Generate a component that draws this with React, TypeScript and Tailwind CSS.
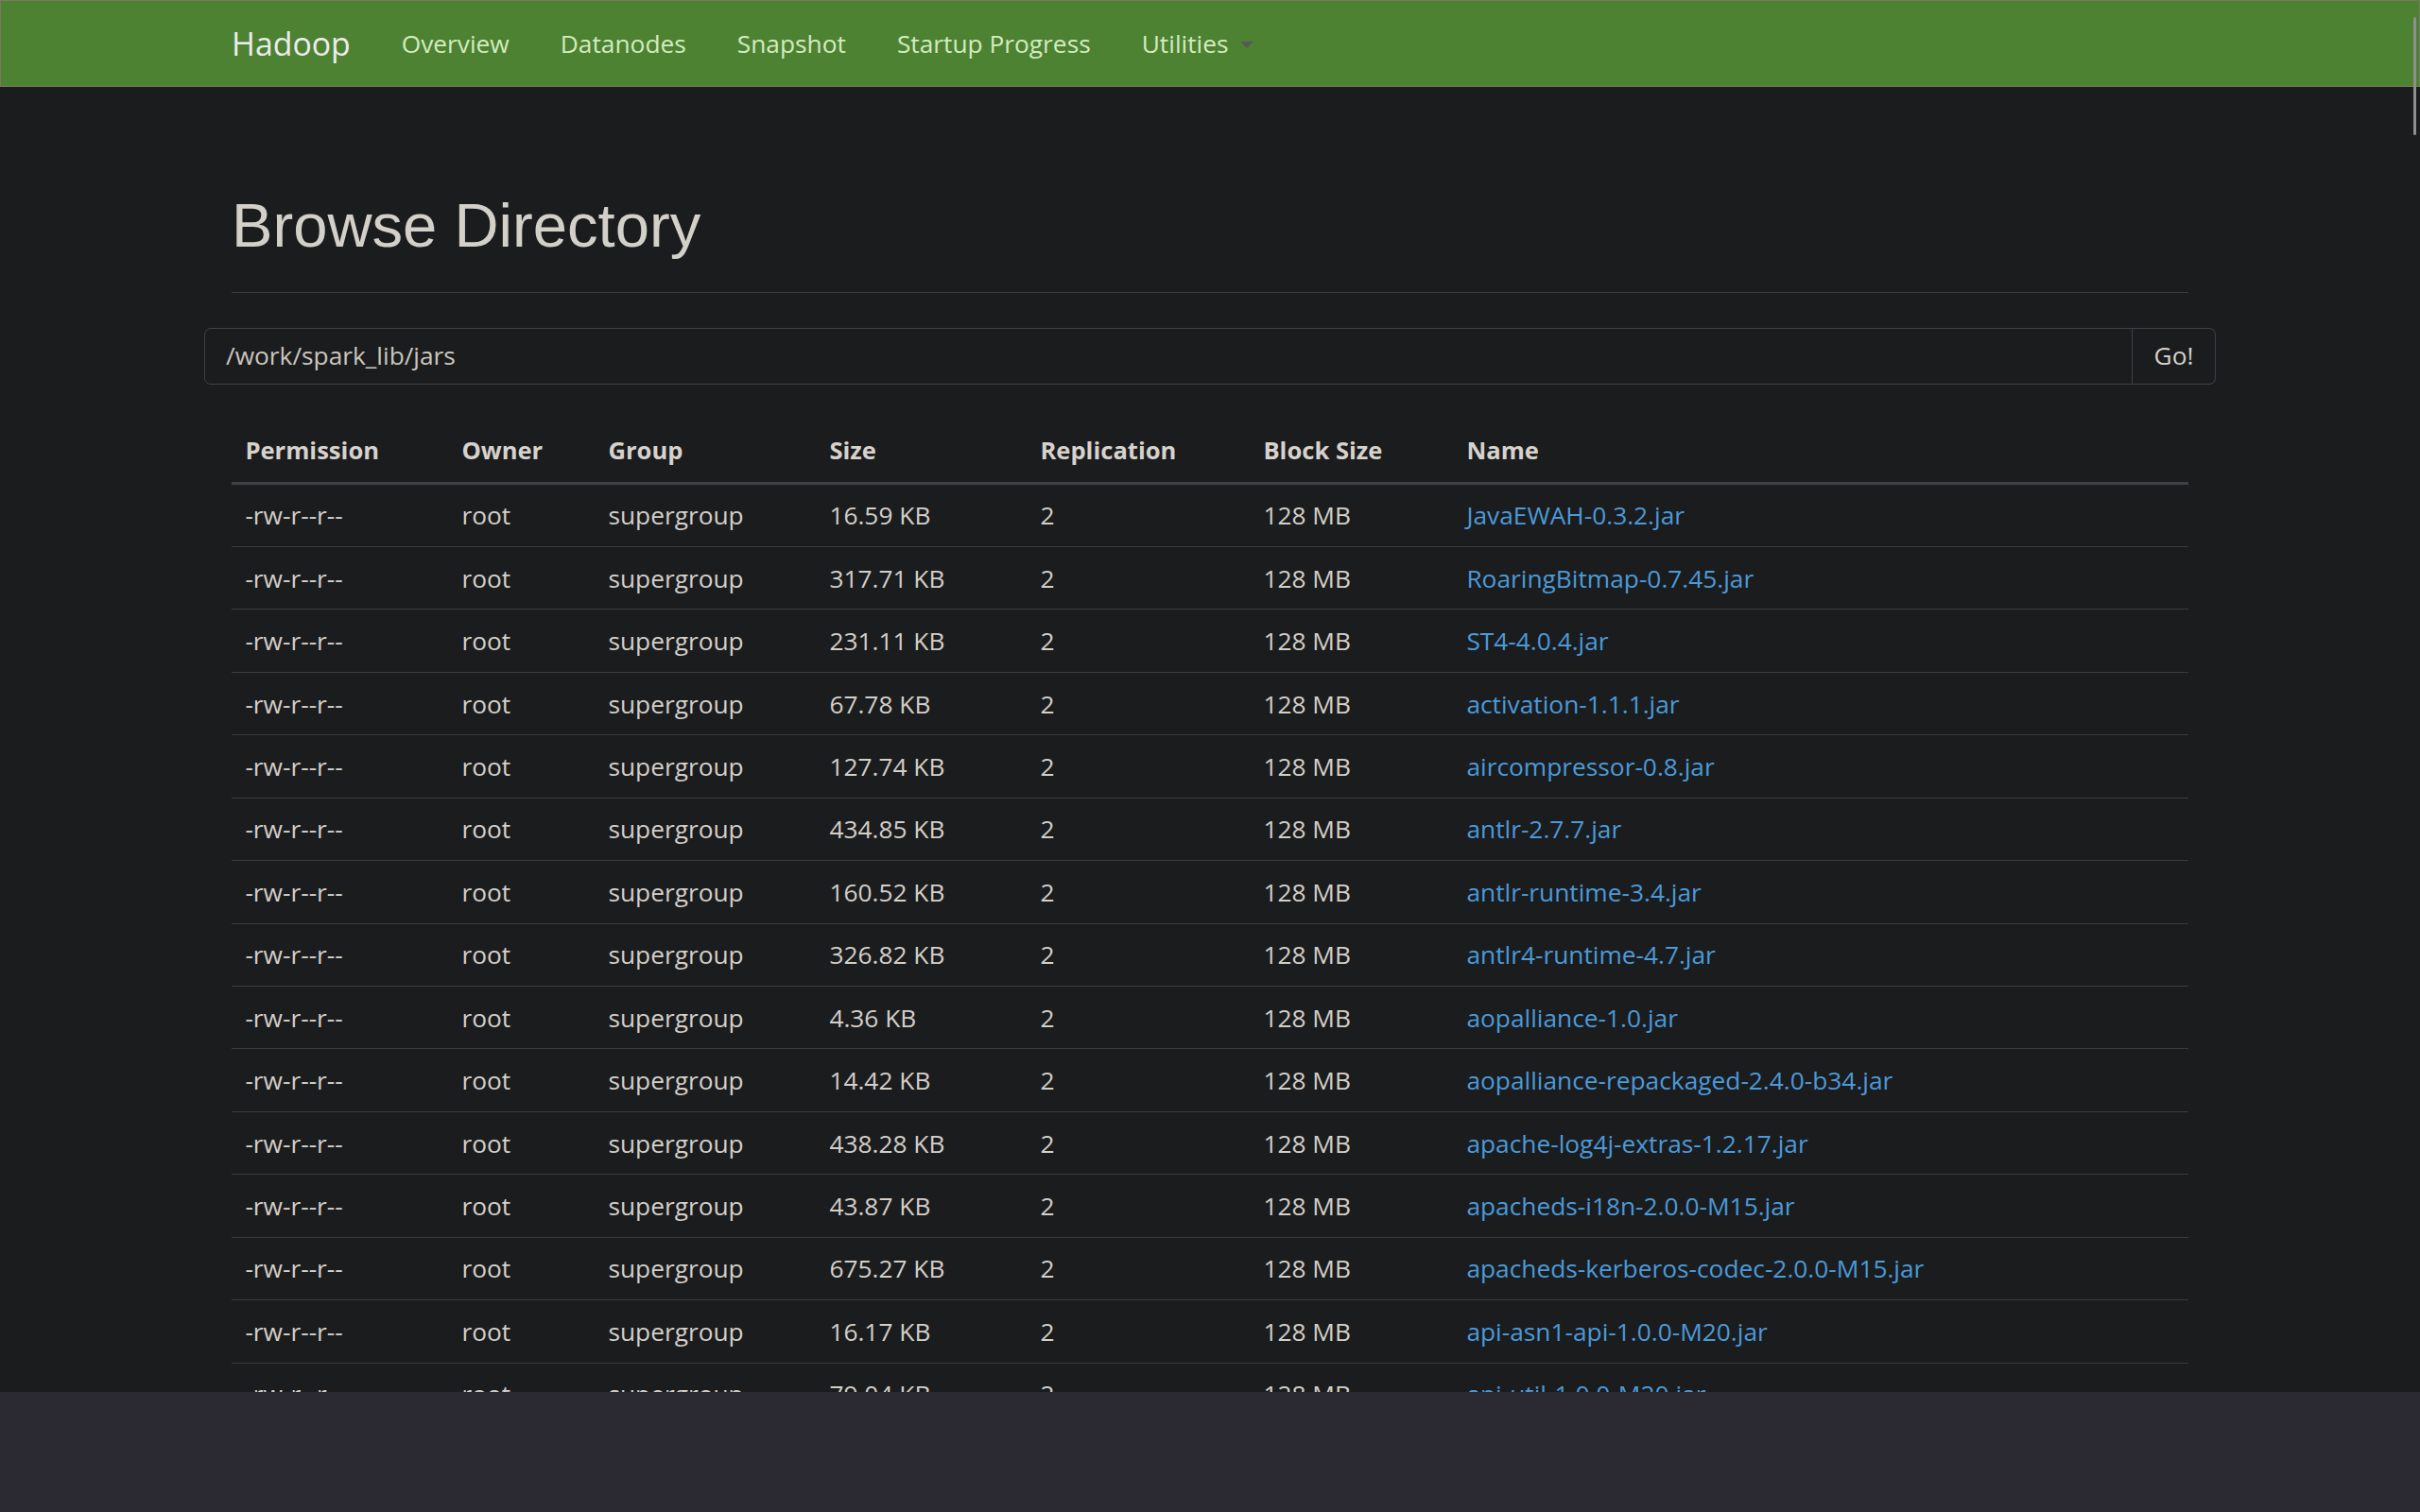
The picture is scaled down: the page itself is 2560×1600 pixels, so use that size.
import React from 'react';

const navLinks = ['Overview', 'Datanodes', 'Snapshot', 'Startup Progress'];

const columns = [
  { label: 'Permission', width: 'w-[229px]' },
  { label: 'Owner', width: 'w-[155px]' },
  { label: 'Group', width: 'w-[234px]' },
  { label: 'Size', width: 'w-[223px]' },
  { label: 'Replication', width: 'w-[236px]' },
  { label: 'Block Size', width: 'w-[215px]' },
  { label: 'Name', width: '' }
];

// size, file name - everything else is the same for every jar
const files: [string, string][] = [
  ['16.59 KB', 'JavaEWAH-0.3.2.jar'],
  ['317.71 KB', 'RoaringBitmap-0.7.45.jar'],
  ['231.11 KB', 'ST4-4.0.4.jar'],
  ['67.78 KB', 'activation-1.1.1.jar'],
  ['127.74 KB', 'aircompressor-0.8.jar'],
  ['434.85 KB', 'antlr-2.7.7.jar'],
  ['160.52 KB', 'antlr-runtime-3.4.jar'],
  ['326.82 KB', 'antlr4-runtime-4.7.jar'],
  ['4.36 KB', 'aopalliance-1.0.jar'],
  ['14.42 KB', 'aopalliance-repackaged-2.4.0-b34.jar'],
  ['438.28 KB', 'apache-log4j-extras-1.2.17.jar'],
  ['43.87 KB', 'apacheds-i18n-2.0.0-M15.jar'],
  ['675.27 KB', 'apacheds-kerberos-codec-2.0.0-M15.jar'],
  ['16.17 KB', 'api-asn1-api-1.0.0-M20.jar'],
  ['79.04 KB', 'api-util-1.0.0-M20.jar'],
  ['60.83 KB', 'arpack_combined_all-0.1.jar']
];

const Navbar = () => (
  <nav className="h-[92px] border border-[#7a7862] bg-[#4d8233]">
    <div className="mx-auto flex h-full w-[2070px] items-stretch">
      <a className="pr-[27px] py-[27px] text-[33.8px] leading-[36px] text-[#ececec]">Hadoop</a>
      {navLinks.map(link => (
        <a key={link} className="px-[27px] py-[27px] text-[26.3px] leading-[36px] text-[#d3ecbd]">
          {link}
        </a>
      ))}
      <a className="flex items-center px-[27px] py-[27px] text-[26.3px] leading-[36px] text-[#d3ecbd]">
        Utilities
        <span className="ml-[13px] mt-[2px] inline-block h-0 w-0 border-x-[7px] border-t-[7px] border-x-transparent border-t-[#555a55]" />
      </a>
    </div>
  </nav>
);

const FileTable = () => (
  <table className="mt-[38px] w-full table-fixed border-separate border-spacing-0 text-left">
    <thead>
      <tr>
        {columns.map(col => (
          <th
            key={col.label}
            className={`${col.width} border-b-[3px] border-[#3e4144] px-[14.4px] py-[14.4px] text-[25.6px] font-bold leading-[36px] text-[#d6d2cc]`}
          >
            {col.label}
          </th>
        ))}
      </tr>
    </thead>
    <tbody>
      {files.map(([size, name]) => (
        <tr key={name}>
          <td className="border-b border-[#393c3e] px-[14.4px] py-[14.73px] leading-[36px]">-rw-r--r--</td>
          <td className="border-b border-[#393c3e] px-[14.4px] py-[14.73px] leading-[36px]">root</td>
          <td className="border-b border-[#393c3e] px-[14.4px] py-[14.73px] leading-[36px]">supergroup</td>
          <td className="border-b border-[#393c3e] px-[14.4px] py-[14.73px] leading-[36px]">{size}</td>
          <td className="border-b border-[#393c3e] px-[14.4px] py-[14.73px] leading-[36px]">2</td>
          <td className="border-b border-[#393c3e] px-[14.4px] py-[14.73px] leading-[36px]">128 MB</td>
          <td className="border-b border-[#393c3e] px-[14.4px] py-[14.73px] leading-[36px]">
            <a className="text-[#4b9ad9]">{name}</a>
          </td>
        </tr>
      ))}
    </tbody>
  </table>
);

export default function App() {
  return (
    <div className="relative h-[1600px] w-full overflow-hidden bg-[#2b2a33] font-['Open_Sans',sans-serif] text-[26.3px] text-[#d3cfc9]">
      <div className="h-[1473px] overflow-hidden bg-[#1b1c1e]">
        <Navbar />

        <main className="mx-auto w-[2070px] pt-[111px]">
          <div className="border-b border-[#3a3d3f] pb-[34px]">
            <h1 className="font-['Liberation_Sans',Arial,sans-serif] text-[65.2px] leading-[1.1] text-[#d3cfc9]">
              Browse Directory
            </h1>
          </div>

          <div className="-mx-[29px] mt-[37px] flex h-[60px]">
            <div className="flex flex-1 items-center rounded-l-[7px] border border-[#3e4144] px-[22px] text-[#cbc6bf]">
              /work/spark_lib/jars
            </div>
            <button className="w-[88px] rounded-r-[7px] border border-l-0 border-[#3e4144] bg-[#1b1c1e] text-center text-[#d3cfc9]">
              Go!
            </button>
          </div>

          <FileTable />
        </main>
      </div>

      {/* overlay scrollbar thumb */}
      <div className="absolute right-[4px] top-[18px] h-[125px] w-[3px] rounded-full bg-[#8f8f8f]" />
    </div>
  );
}
